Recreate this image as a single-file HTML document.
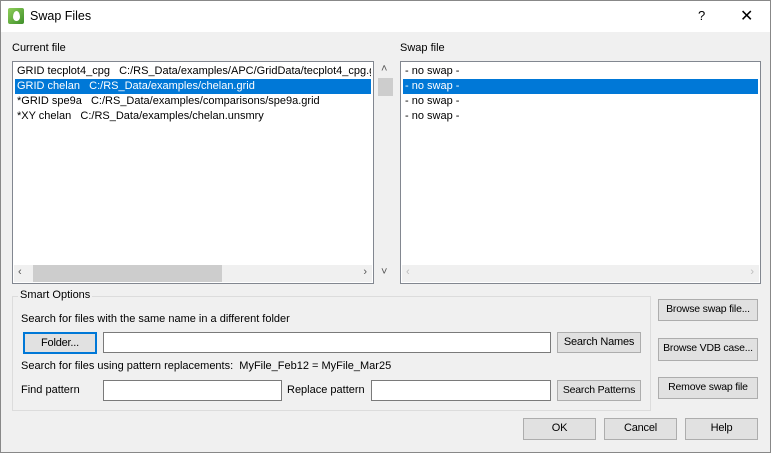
<!DOCTYPE html>
<html><head><style>
*{box-sizing:border-box;margin:0;padding:0}
body{width:771px;height:453px;background:#f0f0f0;font-family:"Liberation Sans",sans-serif;font-size:11px;color:#000;position:relative;overflow:hidden}
.a{position:absolute;white-space:nowrap}
.box{position:absolute;background:#fff;border:1px solid #828790}
.btn{position:absolute;background:#e1e1e1;border:1px solid #adadad;text-align:center;line-height:19px;white-space:nowrap;letter-spacing:-0.2px}
.inp{position:absolute;background:#fff;border:1px solid #7a7a7a}
.row{position:absolute;left:2px;height:15px;line-height:15px;padding-left:2px;white-space:nowrap;overflow:hidden}
.sel{background:#0078d7;color:#fff}
.hs{position:absolute;left:1px;right:1px;bottom:1px;height:17px;background:#f0f0f0}
</style></head><body>
<div class="a" style="left:0;top:0;width:771px;height:453px;border:1px solid #888"></div>
<div class="a" style="left:1px;top:1px;width:769px;height:31px;background:#fff"></div>
<div class="a" style="left:8px;top:8px;width:16px;height:16px;background:linear-gradient(135deg,#8fcf5a,#3f8f2a);border-radius:2px"></div>
<div class="a" style="left:13px;top:11px;width:7px;height:10px;background:#fff;border-radius:50% 50% 50% 50%/60% 60% 40% 40%"></div>
<div class="a" style="left:30px;top:9px;font-size:12.5px">Swap Files</div>
<div class="a" style="left:698px;top:8px;font-size:13px">?</div>
<div class="a" style="left:740px;top:6px;font-size:16px">✕</div>

<div class="a" style="left:12px;top:42px">Current file</div>
<div class="a" style="left:400px;top:42px">Swap file</div>

<div class="box" style="left:12px;top:61px;width:362px;height:223px;overflow:hidden">
<div class="row" style="top:2px;width:356px">GRID tecplot4_cpg&nbsp;&nbsp; C:/RS_Data/examples/APC/GridData/tecplot4_cpg.grid</div>
<div class="row sel" style="top:17px;width:356px">GRID chelan&nbsp;&nbsp; C:/RS_Data/examples/chelan.grid</div>
<div class="row" style="top:32px">*GRID spe9a&nbsp;&nbsp; C:/RS_Data/examples/comparisons/spe9a.grid</div>
<div class="row" style="top:47px">*XY chelan&nbsp;&nbsp; C:/RS_Data/examples/chelan.unsmry</div>
<div class="hs"><div class="a" style="left:19px;top:0;width:189px;height:17px;background:#cdcdcd"></div>
<div class="a" style="left:4px;top:1px;color:#555">‹</div><div class="a" style="right:5px;top:1px;color:#555">›</div></div>
</div>
<div class="a" style="left:377px;top:61px;width:17px;height:223px;background:#f0f0f0">
<div class="a" style="left:4px;top:2px;font-size:11px;color:#555">˄</div>
<div class="a" style="left:1px;top:17px;width:15px;height:18px;background:#cdcdcd"></div>
<div class="a" style="left:4px;top:205px;font-size:11px;color:#555">˅</div>
</div>

<div class="box" style="left:400px;top:61px;width:361px;height:223px;overflow:hidden">
<div class="row" style="top:2px">- no swap -</div>
<div class="row sel" style="top:17px;width:355px">- no swap -</div>
<div class="row" style="top:32px">- no swap -</div>
<div class="row" style="top:47px">- no swap -</div>
<div class="hs"><div class="a" style="left:4px;top:1px;color:#bbb">‹</div><div class="a" style="right:5px;top:1px;color:#bbb">›</div></div>
</div>

<div class="a" style="left:12px;top:296px;width:639px;height:115px;border:1px solid #dcdcdc"></div>
<div class="a" style="left:18px;top:289px;background:#f0f0f0;padding:0 2px">Smart Options</div>
<div class="a" style="left:21px;top:313px">Search for files with the same name in a different folder</div>
<div class="btn" style="left:23px;top:332px;width:74px;height:22px;border:2px solid #0078d7;line-height:18px">Folder...</div>
<div class="inp" style="left:103px;top:332px;width:448px;height:21px"></div>
<div class="btn" style="left:557px;top:332px;width:84px;height:21px">Search Names</div>
<div class="a" style="left:21px;top:360px">Search for files using pattern replacements:&nbsp; MyFile_Feb12 = MyFile_Mar25</div>
<div class="a" style="left:21px;top:384px">Find pattern</div>
<div class="inp" style="left:103px;top:380px;width:179px;height:21px"></div>
<div class="a" style="left:287px;top:384px">Replace pattern</div>
<div class="inp" style="left:371px;top:380px;width:180px;height:21px"></div>
<div class="btn" style="left:557px;top:380px;width:84px;height:21px;font-size:10.5px">Search Patterns</div>

<div class="btn" style="left:658px;top:299px;width:100px;height:22px;font-size:10.5px">Browse swap file...</div>
<div class="btn" style="left:658px;top:338px;width:100px;height:23px;font-size:10.5px">Browse VDB case...</div>
<div class="btn" style="left:658px;top:377px;width:100px;height:22px;font-size:10.5px">Remove swap file</div>

<div class="btn" style="left:523px;top:418px;width:73px;height:22px">OK</div>
<div class="btn" style="left:604px;top:418px;width:73px;height:22px">Cancel</div>
<div class="btn" style="left:685px;top:418px;width:73px;height:22px">Help</div>
</body></html>
